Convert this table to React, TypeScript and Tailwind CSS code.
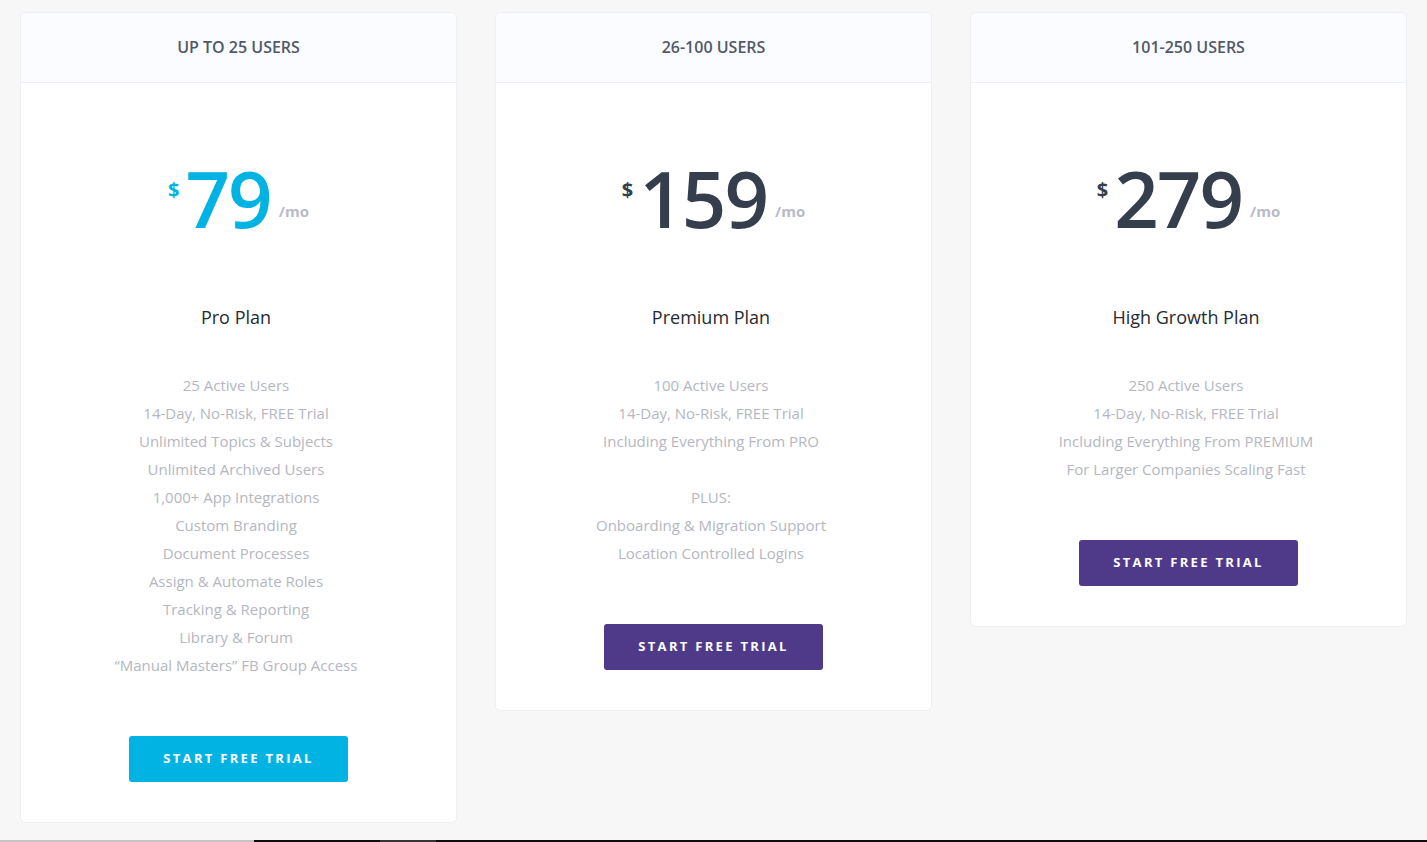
import React from "react";

type Plan = {
  header: string;
  price: string;
  name: string;
  features: string[];
  accent: boolean;
};

const plans: Plan[] = [
  {
    header: "UP TO 25 USERS",
    price: "79",
    name: "Pro Plan",
    accent: true,
    features: [
      "25 Active Users",
      "14-Day, No-Risk, FREE Trial",
      "Unlimited Topics & Subjects",
      "Unlimited Archived Users",
      "1,000+ App Integrations",
      "Custom Branding",
      "Document Processes",
      "Assign & Automate Roles",
      "Tracking & Reporting",
      "Library & Forum",
      "\u201CManual Masters\u201D FB Group Access",
    ],
  },
  {
    header: "26-100 USERS",
    price: "159",
    name: "Premium Plan",
    accent: false,
    features: [
      "100 Active Users",
      "14-Day, No-Risk, FREE Trial",
      "Including Everything From PRO",
      "",
      "PLUS:",
      "Onboarding & Migration Support",
      "Location Controlled Logins",
    ],
  },
  {
    header: "101-250 USERS",
    price: "279",
    name: "High Growth Plan",
    accent: false,
    features: [
      "250 Active Users",
      "14-Day, No-Risk, FREE Trial",
      "Including Everything From PREMIUM",
      "For Larger Companies Scaling Fast",
    ],
  },
];

function Card({ plan }: { plan: Plan }) {
  return (
    <div className="w-[437px] shrink-0 bg-white border border-[#eeeff1] rounded-[6px] overflow-hidden">
      <div className="h-[70px] pb-[2px] bg-[#fafcff] border-b border-[#eef0f3] flex items-center justify-center">
        <span className="text-[16px] font-semibold text-[#515867]">
          {plan.header}
        </span>
      </div>
      <div className="flex flex-col items-center pt-[76px] pb-[40px]">
        <div className="flex items-start h-[78px]">
          <span
            className={
              plan.accent
                ? "text-[20px] leading-none font-bold mt-[21px] mr-[6px] text-[#00b3e3]"
                : "text-[20px] leading-none font-bold mt-[21px] mr-[6px] text-[#353e4c]"
            }
          >
            $
          </span>
          <span
            className={
              plan.accent
                ? "text-[78px] leading-none font-semibold tracking-[-2px] text-[#00b3e3]"
                : "text-[78px] leading-none font-semibold tracking-[-2px] text-[#353e4c]"
            }
          >
            {plan.price}
          </span>
          <span className="text-[15px] leading-none font-bold mt-[45px] ml-[8px] text-[#b8bcc6]">
            /mo
          </span>
        </div>
        <div className="w-full flex flex-col items-center pr-[5px]">
          <div className="mt-[68px] h-[24px] leading-[24px] text-[18px] text-[#262b33]">
            {plan.name}
          </div>
          <ul className="mt-[42px] flex flex-col items-center">
            {plan.features.map((f, i) => (
              <li
                key={i}
                className="h-[28px] leading-[28px] text-[15px] font-normal text-[#b4b7bf]"
              >
                {f}
              </li>
            ))}
          </ul>
        </div>
        <button
          className={
            plan.accent
              ? "mt-[57px] w-[219px] h-[46px] rounded-[3px] bg-[#00b3e3] text-white text-[13px] font-bold tracking-[2.3px]"
              : "mt-[57px] w-[219px] h-[46px] rounded-[3px] bg-[#4f3a8a] text-white text-[13px] font-bold tracking-[2.3px]"
          }
        >
          START FREE TRIAL
        </button>
      </div>
    </div>
  );
}

export default function App() {
  return (
    <div
      className="h-[842px] w-full flex flex-col bg-[#f7f7f7] overflow-hidden"
      style={{ fontFamily: '"Open Sans", "Noto Sans", sans-serif' }}
    >
      <div className="flex-1 flex items-start gap-[38px] px-[20px] pt-[12px]">
        {plans.map((p) => (
          <Card key={p.header} plan={p} />
        ))}
      </div>
      <div className="h-[2px] flex">
        <div className="w-[254px] bg-[#c4c4c4]" />
        <div className="w-[126px] bg-[#0d0d0d]" />
        <div className="w-[56px] bg-[#353535]" />
        <div className="flex-1 bg-[#0d0d0d]" />
      </div>
    </div>
  );
}
